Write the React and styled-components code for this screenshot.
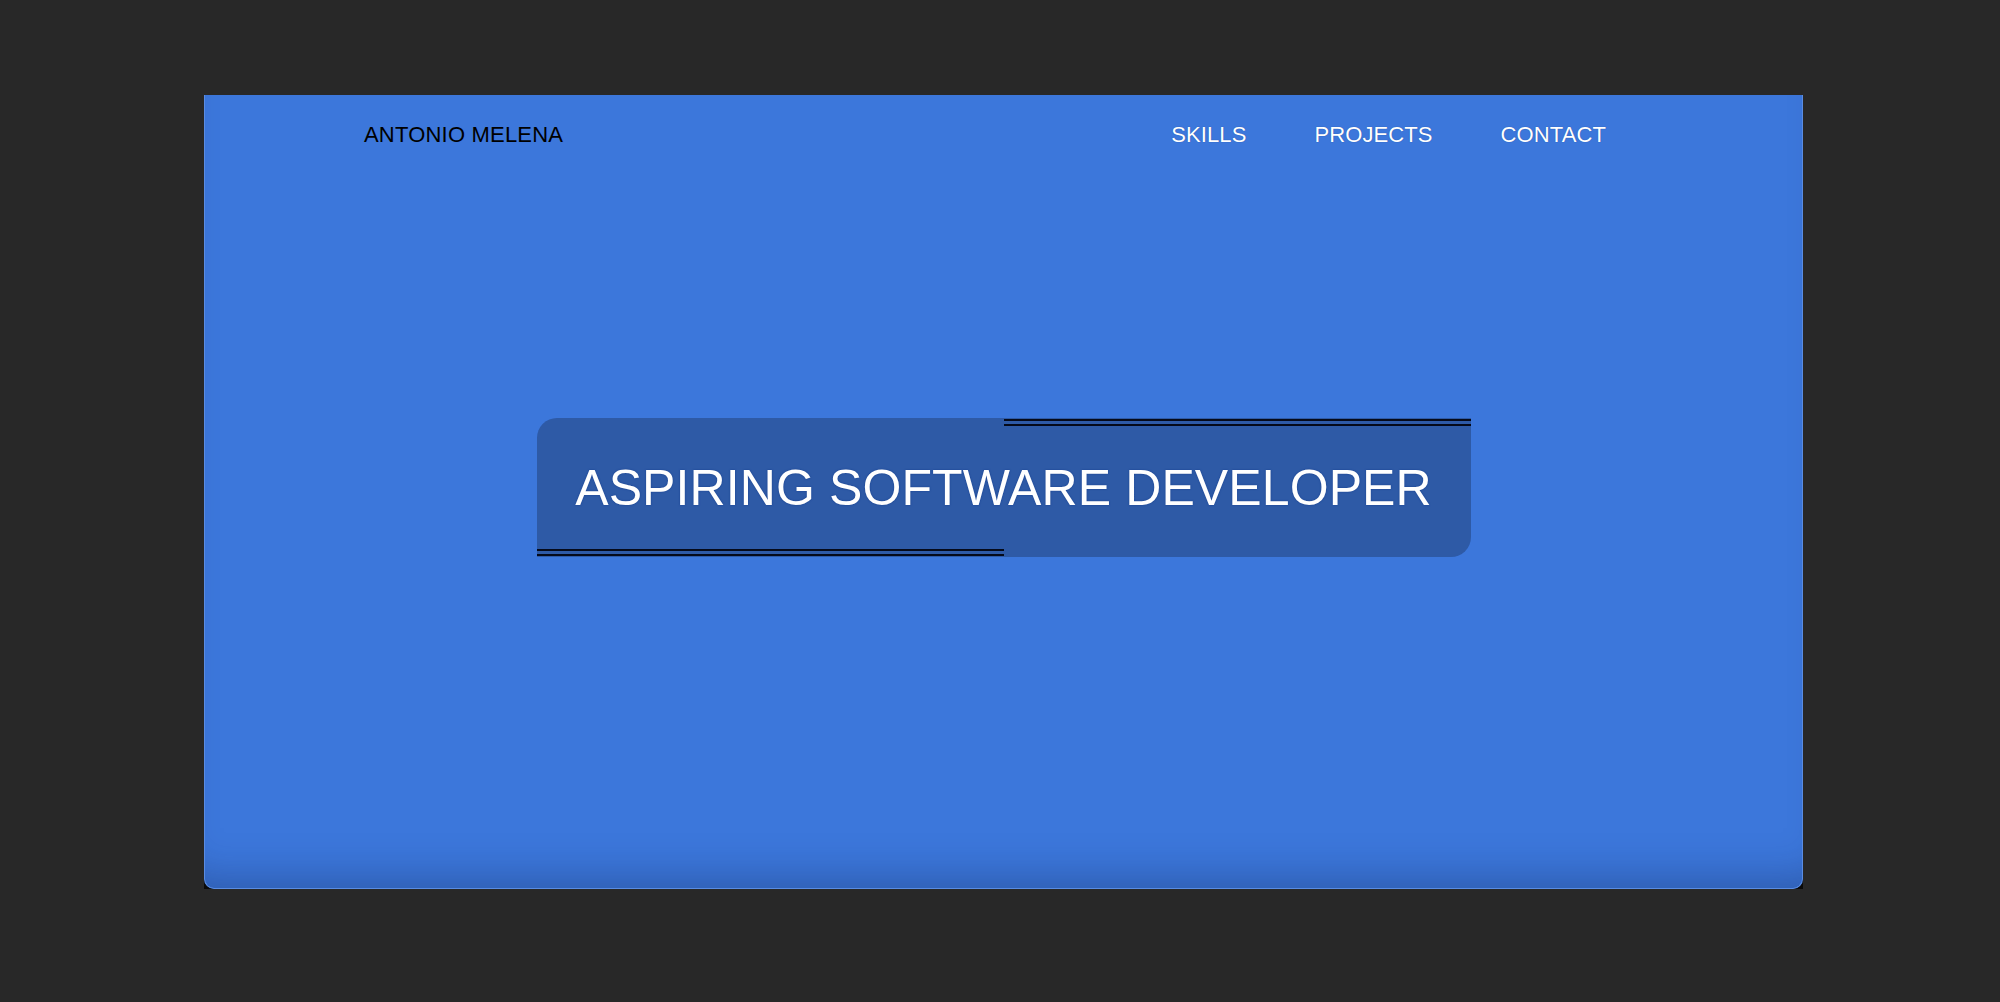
import React from "react"
import styled, { createGlobalStyle } from "styled-components"

const GlobalStyle = createGlobalStyle`
    html, body {
        margin: 0;
        padding: 0;
        background-color: #282828;
        font-family: "Liberation Sans", Arial, sans-serif;
    }
`

const Page = styled.div`
    width: 2000px;
    height: 1002px;
    padding: 95px 0 0 204px;
    box-sizing: border-box;
`
// black backing shows only at the rounded bottom corners
const CardBacking = styled.div`
    width: 1599px;
    height: 794px;
    background-color: #0a0a0a;
`
const Card = styled.main`
    width: 100%;
    height: 100%;
    box-sizing: border-box;
    display: flex;
    flex-direction: column;
    background-color: #3c77db;
    border: 1px solid #5a8ce2;
    border-top: none;
    border-radius: 0 0 10px 10px;
    box-shadow: inset 0 -40px 40px -30px rgba(20, 40, 90, 0.35);
`

const Header = styled.header`
    height: 80px;
    padding: 0 162px 0 159px;
    display: flex;
    align-items: center;
    justify-content: space-between;
`
const Name = styled.h1`
    margin: 0;
    font-size: 22px;
    font-weight: 400;
    letter-spacing: 0.2px;
    color: #000;
`
const Nav = styled.nav`
    display: flex;
    align-items: center;
`
const NavLink = styled.a`
    padding: 0 34px;
    font-size: 22px;
    letter-spacing: 0.1px;
    color: #fff;
    text-decoration: none;
    text-shadow: 0 0 1px #1c4a9c;
`

const Hero = styled.section`
    flex: 1;
    display: flex;
    align-items: center;
    justify-content: center;
    padding-bottom: 88px;
`
const Banner = styled.div`
    position: relative;
    width: 934px;
    height: 139px;
    box-sizing: border-box;
    display: flex;
    align-items: center;
    justify-content: center;
    background-color: #2e5aa6;
    border-radius: 20px 0 20px 0;

    &::before, &::after {
        content: "";
        position: absolute;
        width: 50%;
        border-top: 7px double #050a1a;
    }
    &::before {
        top: 1px;
        right: 0;
    }
    &::after {
        bottom: 1px;
        left: 0;
    }
`
const Title = styled.h2`
    margin: 0;
    font-size: 50px;
    font-weight: 400;
    color: #fff;
    letter-spacing: 0.1px;
    text-shadow: 0 0 2px #143c8c;
`

const App = () => {
    const links = ["SKILLS", "PROJECTS", "CONTACT"]

    return (
        <Page>
            <GlobalStyle />
            <CardBacking>
                <Card>
                    <Header>
                        <Name>ANTONIO MELENA</Name>
                        <Nav>
                            {links.map((link) => (
                                <NavLink key={link} href={"#" + link.toLowerCase()}>{link}</NavLink>
                            ))}
                        </Nav>
                    </Header>
                    <Hero>
                        <Banner>
                            <Title>ASPIRING SOFTWARE DEVELOPER</Title>
                        </Banner>
                    </Hero>
                </Card>
            </CardBacking>
        </Page>
    )
}

export default App
